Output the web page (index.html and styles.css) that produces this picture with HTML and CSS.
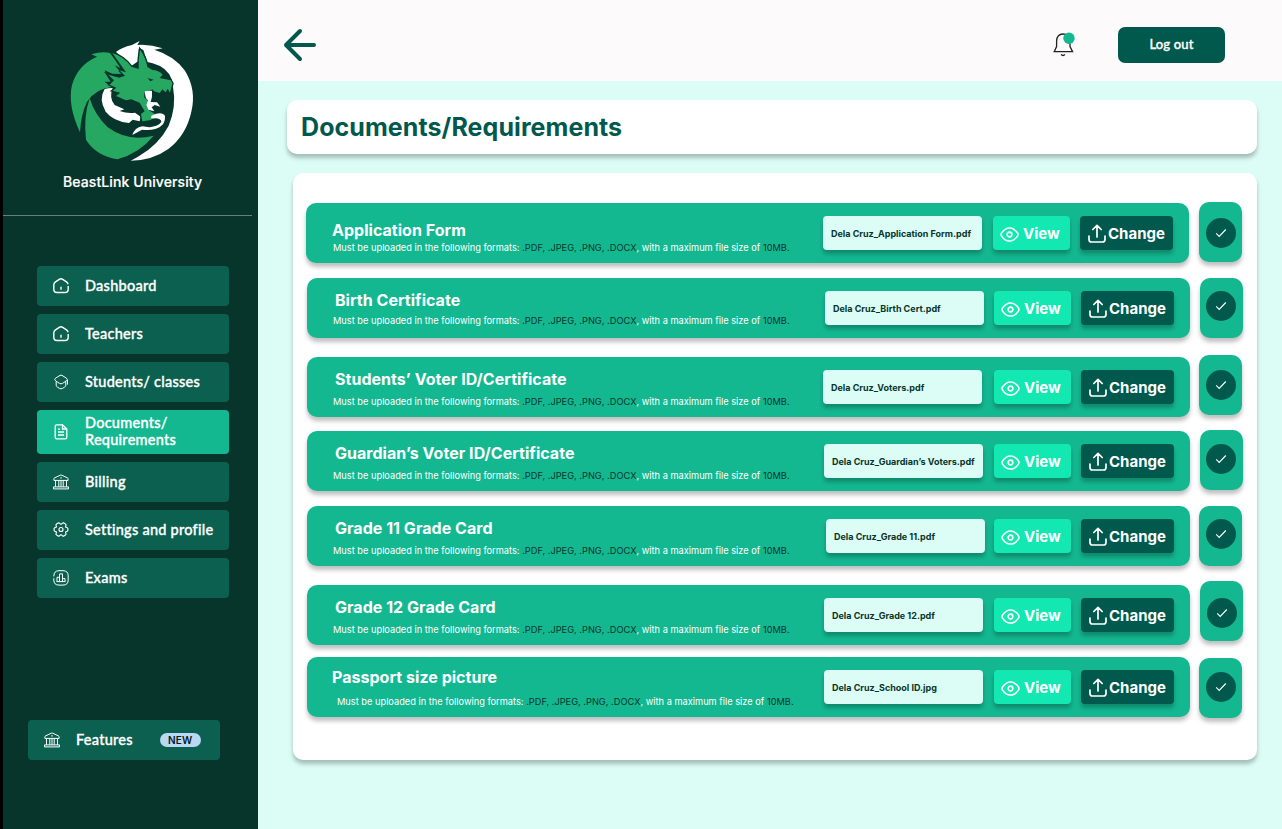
FILE: index.html
```html
<!DOCTYPE html>
<html lang="en">
<head>
<meta charset="utf-8">
<title>BeastLink University</title>
<link rel="stylesheet" href="styles.css">
</head>
<body>
<svg class="defs" aria-hidden="true">
  <symbol id="home" viewBox="0 0 16 16"><path d="M15.1 6.200 14.600 5Q14.300 4.500 13.500 3.900L9.700 1.300Q8 .3 6.300 1.300L2.500 3.900Q.8 5 .8 7V11.500Q.8 14.500 3.800 14.500h8.400q3 0 3-3V8M8 8.700v3" fill="none" stroke="currentColor" stroke-width="1.400"/></symbol>
  <symbol id="cap" viewBox="0 0 16 16"><path d="M7 1.400 2.600 4.100Q.8 5.400 2.600 6.800L6.500 9.400q1.500.9 3 0l3.900-2.600q1.800-1.400 0-2.700L9 1.400Q8 .9 7 1.400ZM3.200 7.300v4q0 1.200 1.100 1.700l2.200 1.400q1.500.9 3 0l2.200-1.400q1.100-.5 1.100-1.700v-4M14.500 6v4.600" fill="none" stroke="currentColor"/></symbol>
  <symbol id="doc" viewBox="0 0 16 16"><path d="M9.500.8H3.600Q2.200.8 2.200 2.200v11.400q0 1.200 1.400 1.200h8.800q1.400 0 1.400-1.200V5L9.500.8V5h4.300M5 5.200h2M5 8h6M5 11h6" fill="none" stroke="currentColor" stroke-width="1.300"/></symbol>
  <symbol id="bank" viewBox="0 0 16 16"><path d="M.9 6.400V4.800q0-.6.6-.9L7.300 1.200q.7-.3 1.400 0l5.800 2.700q.6.3.6.9v1.600ZM.5 14.900v-2h15v2ZM2.500 6.500v6.300M5.800 6.500v6.300M8 6.500v6.300M10.200 6.500v6.300M13.500 6.500v6.300M7.200 3.900h1.600" fill="none" stroke="currentColor"/></symbol>
  <symbol id="gear" viewBox="0 0 16 16"><path d="M8 2.400 9.600 1.100Q10.200.8 10.900 1.100L12.400 2Q13.100 2.500 13 3.200L12.500 5l1.800.8Q14.900 6.200 14.900 6.800V8.200q0 .6-.6 1L12.500 10l.5 1.800q.1.700-.6 1.200l-1.500.9q-.7.300-1.300 0L8 12.600 6.400 13.900q-.6.300-1.300 0L3.600 13Q2.900 12.500 3 11.800L3.500 10 1.700 9.200q-.6-.4-.6-1V6.800q0-.6.600-1L3.500 5 3 3.200Q2.900 2.500 3.600 2l1.500-.9q.7-.3 1.300 0Z" fill="none" stroke="currentColor" stroke-width="1.150" stroke-linejoin="round"/><circle cx="8" cy="7.500" r="2" fill="none" stroke="currentColor" stroke-width="1.150"/></symbol>
  <symbol id="chart" viewBox="0 0 16 16"><path d="M.8 6.400Q.8.7 6 .7h4q5.200 0 5.200 5.200v4q0 5.200-5.200 5.200H6Q.8 15.100.8 9.900V8.200M4 11.600V7.300h2.500v4.300M6.500 11.600V3.900h3v7.700M9.500 11.600V8.600H12v3M3.600 11.600h8.800" fill="none" stroke="currentColor"/></symbol>
  <symbol id="eye" viewBox="0 0 20 16"><path d="M1.400 6.600Q5 1 10 1t8.600 5.600q.8 1.400 0 2.800Q15 15 10 15T1.400 9.400q-.8-1.400 0-2.800Z" fill="none" stroke="currentColor" stroke-width="1.700"/><circle cx="10" cy="8" r="2.500" fill="none" stroke="currentColor" stroke-width="1.700"/></symbol>
  <symbol id="upload" viewBox="0 0 18 19"><path d="M1 12v3.500Q1 18 3.500 18h11q2.500 0 2.500-2.500V12M9 13V1.500M4.800 5.500 9 1.300l4.200 4.200" fill="none" stroke="currentColor" stroke-width="1.700" stroke-linecap="round" stroke-linejoin="round"/></symbol>
  <symbol id="check" viewBox="0 0 12 10"><path d="m1.200 5.400 3 3L10.800 1.500" fill="none" stroke="currentColor" stroke-width="1.100"/></symbol>
</svg>
<div class="app">
  <aside class="sidebar">
    <div class="brand">
      <svg class="logo" viewBox="0 0 435 405" role="img" aria-label="Dragon emblem">
        <path fill="#fff" d="M168 66Q185 52 216 45L239 33 232 45Q270 42 308 55L283 59Q344 78 375 122 410 180 394 245 379 315 325 357 276 392 212 392L234 380Q296 345 326 287 350 230 339 170L335 148Q322 112 278 100L262 96 250 60 237 54 234 94 214 108Z"/>
        <path fill="#27a862" d="M60 307Q22 226 36 165 53 105 111 80L94 73Q126 63 150 69 164 87 181 114L164 106 186 132 157 131 134 121Q139 140 152 155L133 155 155 171Q109 175 81 215 63 252 60 307Z"/>
        <path fill="#27a862" d="M89 205Q103 253 142 291 204 337 281 317 239 369 172 388 108 377 78 329 70 260 89 205Z"/>
        <path fill="#fff" d="M158 174Q146 205 164 225L193 238 179 243Q204 252 225 248L242 260 239 274 218 269 207 279Q160 274 137 245 115 207 134 177 144 174 158 174Z"/>
        <path fill="#27a862" stroke="#08352b" stroke-width="8" paint-order="stroke" d="M157 69Q192 80 214 110L236 117Q235 85 240 59 258 84 262 111L277 120Q295 120 308 134L299 144 332 151 337 160 330 188 323 176 317 187 307 178 299 189 282 184 277 178 263 186 252 182 253 203 264 212 260 225 265 239 284 252 273 270 247 274 243 252 254 244 239 218 214 208 198 211 168 198 181 188 158 182 169 173 149 164 162 151 145 134 178 143 195 137 178 121 198 127Z"/>
        <path fill="#08352b" d="m263 144 18 5-10 5Z"/>
        <path fill="#fff" d="M253 184 276 182 276 200 272 216 291 217 301 230 284 225 275 232 283 244 265 239 259 225 264 211 258 205ZM274 257Q306 242 315 258 318 286 288 296 269 302 246 299L217 315Q224 293 247 289L268 292Q295 289 304 276 303 262 274 266Z"/>
      </svg>
      <div class="brand-name">BeastLink University</div>
    </div>
    <nav class="nav">
      <a class="nav-item"><svg class="nav-icon"><use href="#home"/></svg><span class="nav-label">Dashboard</span></a>
      <a class="nav-item"><svg class="nav-icon"><use href="#home"/></svg><span class="nav-label">Teachers</span></a>
      <a class="nav-item"><svg class="nav-icon"><use href="#cap"/></svg><span class="nav-label">Students/ classes</span></a>
      <a class="nav-item nav-item-active"><svg class="nav-icon"><use href="#doc"/></svg><span class="nav-label">Documents/<br>Requirements</span></a>
      <a class="nav-item"><svg class="nav-icon"><use href="#bank"/></svg><span class="nav-label">Billing</span></a>
      <a class="nav-item"><svg class="nav-icon"><use href="#gear"/></svg><span class="nav-label">Settings and profile</span></a>
      <a class="nav-item"><svg class="nav-icon"><use href="#chart"/></svg><span class="nav-label">Exams</span></a>
    </nav>
    <a class="nav-item features"><svg class="nav-icon"><use href="#bank"/></svg><span class="nav-label">Features</span><span class="badge">NEW</span></a>
  </aside>
  <div class="content">
    <header class="topbar">
      <svg class="back" viewBox="0 0 34 34"><path d="M17 3 3 17l14 14M3 17h28" fill="none" stroke="#00594c" stroke-width="4" stroke-linecap="round" stroke-linejoin="round"/></svg>
      <svg class="bell" viewBox="0 0 24 26"><path d="M2.200 19.700 4.600 14.500V9Q5 2 11 2t7 7v5.500l2.600 5.200Z" fill="none" stroke="#222" stroke-width="1.300"/><path d="M9 22.600q2 1.800 4 0" fill="none" stroke="#222" stroke-width="1.300"/><circle cx="17" cy="6.300" r="5.700" fill="#13b891"/></svg>
      <button class="logout">Log out</button>
    </header>
    <main class="main">
      <h1 class="page-title">Documents/Requirements</h1>
      <section class="panel">
        <div class="row row-1">
          <div class="bar"><div class="info"><h2>Application Form</h2><p>Must be uploaded in the following formats: <b>.PDF, .JPEG, .PNG, .DOCX</b>, with a maximum file size of <b>10MB.</b></p></div><div class="file">Dela Cruz_Application Form.pdf</div><button class="btn view"><svg><use href="#eye"/></svg>View</button><button class="btn change"><svg><use href="#upload"/></svg>Change</button></div>
          <div class="status"><span class="tick"><svg><use href="#check"/></svg></span></div>
        </div>
        <div class="row row-2">
          <div class="bar"><div class="info"><h2>Birth Certificate</h2><p>Must be uploaded in the following formats: <b>.PDF, .JPEG, .PNG, .DOCX</b>, with a maximum file size of <b>10MB.</b></p></div><div class="file">Dela Cruz_Birth Cert.pdf</div><button class="btn view"><svg><use href="#eye"/></svg>View</button><button class="btn change"><svg><use href="#upload"/></svg>Change</button></div>
          <div class="status"><span class="tick"><svg><use href="#check"/></svg></span></div>
        </div>
        <div class="row row-3">
          <div class="bar"><div class="info"><h2>Students’ Voter ID/Certificate</h2><p>Must be uploaded in the following formats: <b>.PDF, .JPEG, .PNG, .DOCX</b>, with a maximum file size of <b>10MB.</b></p></div><div class="file">Dela Cruz_Voters.pdf</div><button class="btn view"><svg><use href="#eye"/></svg>View</button><button class="btn change"><svg><use href="#upload"/></svg>Change</button></div>
          <div class="status"><span class="tick"><svg><use href="#check"/></svg></span></div>
        </div>
        <div class="row row-4">
          <div class="bar"><div class="info"><h2>Guardian’s Voter ID/Certificate</h2><p>Must be uploaded in the following formats: <b>.PDF, .JPEG, .PNG, .DOCX</b>, with a maximum file size of <b>10MB.</b></p></div><div class="file">Dela Cruz_Guardian’s Voters.pdf</div><button class="btn view"><svg><use href="#eye"/></svg>View</button><button class="btn change"><svg><use href="#upload"/></svg>Change</button></div>
          <div class="status"><span class="tick"><svg><use href="#check"/></svg></span></div>
        </div>
        <div class="row row-5">
          <div class="bar"><div class="info"><h2>Grade 11 Grade Card</h2><p>Must be uploaded in the following formats: <b>.PDF, .JPEG, .PNG, .DOCX</b>, with a maximum file size of <b>10MB.</b></p></div><div class="file">Dela Cruz_Grade 11.pdf</div><button class="btn view"><svg><use href="#eye"/></svg>View</button><button class="btn change"><svg><use href="#upload"/></svg>Change</button></div>
          <div class="status"><span class="tick"><svg><use href="#check"/></svg></span></div>
        </div>
        <div class="row row-6">
          <div class="bar"><div class="info"><h2>Grade 12 Grade Card</h2><p>Must be uploaded in the following formats: <b>.PDF, .JPEG, .PNG, .DOCX</b>, with a maximum file size of <b>10MB.</b></p></div><div class="file">Dela Cruz_Grade 12.pdf</div><button class="btn view"><svg><use href="#eye"/></svg>View</button><button class="btn change"><svg><use href="#upload"/></svg>Change</button></div>
          <div class="status"><span class="tick"><svg><use href="#check"/></svg></span></div>
        </div>
        <div class="row row-7">
          <div class="bar"><div class="info"><h2>Passport size picture</h2><p>Must be uploaded in the following formats: <b>.PDF, .JPEG, .PNG, .DOCX</b>, with a maximum file size of <b>10MB.</b></p></div><div class="file">Dela Cruz_School ID.jpg</div><button class="btn view"><svg><use href="#eye"/></svg>View</button><button class="btn change"><svg><use href="#upload"/></svg>Change</button></div>
          <div class="status"><span class="tick"><svg><use href="#check"/></svg></span></div>
        </div>
      </section>
    </main>
  </div>
</div>
</body>
</html>
```
FILE: styles.css
```css
* { box-sizing: border-box; margin: 0; }
body { font-family: Inter, "Liberation Sans", sans-serif; background: #dbfdf5; overflow: hidden; }
button { border: 0; font: inherit; }
.defs { display: none; }
.app { display: flex; width: 1282px; height: 829px; }

.sidebar { width: 258px; flex: none; background: #08352b; border-left: 3px solid #000; display: flex; flex-direction: column; color: #fff; }
.brand { width: 249px; height: 216px; padding: 30px 0 0 57px; border-bottom: 1px solid #66807a; }
.logo { display: block; width: 145px; height: 135px; }
.brand-name { margin: 8px 0 0 3px; font-size: 14px; line-height: 18px; font-weight: 500; letter-spacing: .1px; white-space: nowrap; -webkit-text-stroke: .2px; }
.nav { display: flex; flex-direction: column; gap: 8px; padding: 50px 0 0 34px; }
.nav-item { width: 192px; height: 40px; border-radius: 4px; background: #0c604f; display: flex; align-items: center; padding-left: 16px; gap: 16px; font: 500 14.500px/17px Lato, sans-serif; letter-spacing: .25px; white-space: nowrap; }
.nav-label { padding-bottom: 2px; -webkit-text-stroke: .35px; }
.nav-item-active { height: 44px; background: #13b891; }
.nav-icon { width: 16px; height: 16px; flex: none; }
.features { margin: 122px 0 0 25px; }
.badge { margin-left: 11px; width: 41px; height: 14px; border-radius: 7px; background: #b8d8f3; color: #071a16; font: 600 10px/14px Inter, sans-serif; text-align: center; }

.content { flex: 1; }
.topbar { height: 81px; background: #fcfafb; display: flex; align-items: center; padding: 0 57px 0 25px; }
.back { width: 34px; height: 34px; margin-top: 8px; }
.bell { width: 24px; height: 26px; margin: 9px 42px 0 auto; }
.logout { width: 107px; height: 36px; margin-top: 9px; padding: 0 0 2px; border-radius: 7px; background: #00594c; color: #fff; font: 500 13px/34px Lato, sans-serif; letter-spacing: .15px; -webkit-text-stroke: .35px; }
.main { padding: 19px 25px 0 29px; }
.page-title { height: 54px; padding-left: 14px; border-radius: 10px; background: #fff; color: #00594c; font-size: 25px; line-height: 55px; font-weight: 700; letter-spacing: .08px; box-shadow: 0 4px 4px rgba(0,0,0,.25); }
.panel { margin: 19px 0 0 6px; height: 587px; padding: 29px 0 0 13px; border-radius: 10px; background: #fff; box-shadow: 0 4px 4px rgba(0,0,0,.25); }

/* Each row carries its own spacing through custom properties. */
.row { --x: 1px; --top: 0px; --title-x: 28px; --title-y: 12px; --sub-x: 26px; --sub-y: 7px; --file-gap: 11px; --status-x: 10px; --status-y: 0px; --tick-x: 7px; --tick-y: 13px; display: flex; height: 60px; margin: var(--top) 0 0 var(--x); }
.row-1 { --x: 0px; --top: 1px; --title-x: 26px; --title-y: 17px; --sub-y: 2px; --status-y: -1px; --tick-y: 16px; --sub-x: 27px; }
.row-2 { --top: 15px; --sub-y: 5px; --file-gap: 10px; --tick-x: 6px; }
.row-3 { --top: 19px; --file-gap: 12px; --status-x: 9px; --status-y: -2px; --tick-y: 15px; }
.row-4 { --top: 14px; --status-y: -1px; --tick-x: 6px; --tick-y: 14px; }
.row-5 { --top: 15px; --file-gap: 9px; --status-x: 9px; }
.row-6 { --top: 19px; --status-y: -4px; --tick-y: 17px; }
.row-7 { --top: 12px; --title-x: 25px; --title-y: 10px; --sub-x: 30px; --sub-y: 9px; --status-x: 9px; --status-y: 1px; --tick-y: 14px; }
.bar { width: 883px; height: 60px; display: flex; align-items: flex-start; padding-right: 16px; border-radius: 10px; background: #13b891; box-shadow: 0 4px 4px rgba(0,0,0,.25); color: #fff; }
.info { flex: 1; white-space: nowrap; }
.info h2 { margin: var(--title-y) 0 0 var(--title-x); font-size: 16px; line-height: 20px; font-weight: 700; letter-spacing: .03px; }
.info p { margin: var(--sub-y) 0 0 var(--sub-x); font: 400 9.250px/12px Inter, sans-serif; }
.info b { font-weight: 400; color: #08352b; }
.file { width: 159px; height: 34px; margin: 13px var(--file-gap) 0 0; padding-left: 8px; border-radius: 4px; background: #dbfdf5; color: #08352b; font-size: 9px; line-height: 35px; font-weight: 700; white-space: nowrap; box-shadow: 0 4px 4px rgba(0,0,0,.25); }
.btn { height: 34px; margin-top: 13px; padding: 0; border-radius: 4px; color: #fff; font-size: 15px; font-weight: 700; display: flex; align-items: center; box-shadow: 0 4px 4px rgba(0,0,0,.25); }
.view { width: 77px; padding-left: 7px; gap: 4px; background: #13e7b2; }
.view svg { width: 19px; height: 15px; margin-top: 3px; flex: none; }
.change { width: 93px; margin-left: 10px; padding-left: 8px; gap: 2px; background: #00594c; }
.change svg { width: 18px; height: 19px; flex: none; }
.status { width: 43px; height: 60px; margin: var(--status-y) 0 0 var(--status-x); padding: var(--tick-y) 0 0 var(--tick-x); border-radius: 10px; background: #13b891; box-shadow: 0 4px 4px rgba(0,0,0,.25); }
.tick { width: 30px; height: 30px; border-radius: 50%; background: #00594c; color: #fff; display: flex; align-items: center; justify-content: center; }
.tick svg { width: 12px; height: 10px; }
```
